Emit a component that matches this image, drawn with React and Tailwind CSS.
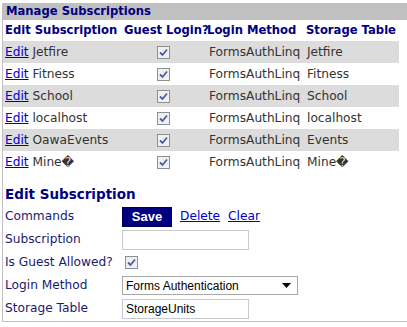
import React from 'react';

const subs = [
  { name: 'Jetfire', table: 'Jetfire' },
  { name: 'Fitness', table: 'Fitness' },
  { name: 'School', table: 'School' },
  { name: 'localhost', table: 'localhost' },
  { name: 'OawaEvents', table: 'Events' },
  { name: 'Mine\uFFFD', table: 'Mine\uFFFD' },
];

const Check = () => (
  <span className="inline-flex w-[13px] h-[13px] border border-[#8f8f8f] bg-[#f0f0f0] items-center justify-center">
    <svg width="9" height="9" viewBox="0 0 9 9">
      <path d="M1 4.5 L3.5 7 L8 1.5" fill="none" stroke="#4a5aa8" strokeWidth="1.8" />
    </svg>
  </span>
);

const App = () => {
  return (
    <div className="w-[407px] h-[327px] bg-white pt-[3px] pl-[2px] font-['DejaVu_Sans',Verdana,sans-serif] text-[12.2px] leading-none">
      <div className="border-l border-b border-[#c0c0c0] pb-[2px]">
        {/* Manage header bar */}
        <div className="h-[17px] bg-[#c0c0c0] flex items-center pl-[3px] font-bold text-[11.6px] text-[#000080]">
          Manage Subscriptions
        </div>

        {/* Column headers */}
        <div className="w-[396px] grid grid-cols-[119px_83px_99px_1fr] h-[21px] items-center font-bold text-[11.6px] text-[#000080]">
          <div className="pl-[2px] whitespace-nowrap">Edit Subscription</div>
          <div className="pl-[2px] whitespace-nowrap">Guest Login?</div>
          <div className="pl-[2px] whitespace-nowrap">Login Method</div>
          <div className="pl-[2px] whitespace-nowrap">Storage Table</div>
        </div>

        {/* Rows */}
        {subs.map((s, i) => (
          <div
            key={s.name}
            className={`w-[396px] grid grid-cols-[119px_83px_99px_1fr] h-[22px] items-center text-[#333333] ${i % 2 === 0 ? 'bg-[#dcdcdc]' : 'bg-white'}`}
          >
            <div className="pl-[2px] whitespace-nowrap">
              <a className="text-[#0000cc] underline">Edit</a> {s.name}
            </div>
            <div className="flex justify-center">
              <Check />
            </div>
            <div className="pl-[4px] whitespace-nowrap">FormsAuthLinq</div>
            <div className="pl-[3px] whitespace-nowrap">{s.table}</div>
          </div>
        ))}

        {/* Edit section */}
        <div className="mt-[15px] pl-[2px] font-bold text-[13.5px] text-[#000080]">Edit Subscription</div>
        <div className="mt-[5px] grid grid-cols-[117px_1fr] gap-y-[3px] text-[#1a1a70] pl-[2px]">
          <div className="flex items-center h-[20px]">Commands</div>
          <div className="flex items-center h-[20px] gap-[8px]">
            <button className="h-[20px] w-[50px] bg-[#000080] text-white font-bold font-['Liberation_Sans',Arial,sans-serif] text-[13px] border border-[#000050]">Save</button>
            <a className="text-[#0000cc] underline">Delete</a>
            <a className="text-[#0000cc] underline">Clear</a>
          </div>

          <div className="flex items-center h-[20px]">Subscription</div>
          <div className="flex items-center h-[20px]">
            <div className="w-[127px] h-[20px] border border-[#c8c8d0] bg-white"></div>
          </div>

          <div className="flex items-center h-[20px]">Is Guest Allowed?</div>
          <div className="flex items-center h-[20px] pl-[3px]">
            <Check />
          </div>

          <div className="flex items-center h-[20px]">Login Method</div>
          <div className="flex items-center h-[20px]">
            <div className="w-[176px] h-[19px] border border-[#a8a8a8] bg-white flex items-center justify-between pl-[3px] pr-[6px] font-['Liberation_Sans',Arial,sans-serif] text-[12px] text-black">
              <span>Forms Authentication</span>
              <svg width="9" height="5" viewBox="0 0 9 5">
                <path d="M0 0 L9 0 L4.5 5 Z" fill="#000" />
              </svg>
            </div>
          </div>

          <div className="flex items-center h-[20px]">Storage Table</div>
          <div className="flex items-center h-[20px]">
            <div className="w-[127px] h-[20px] border border-[#c8c8d0] bg-white flex items-center pl-[3px] font-['Liberation_Sans',Arial,sans-serif] text-[12px] text-black">
              StorageUnits
            </div>
          </div>
        </div>
      </div>
    </div>
  );
};

export default App;
